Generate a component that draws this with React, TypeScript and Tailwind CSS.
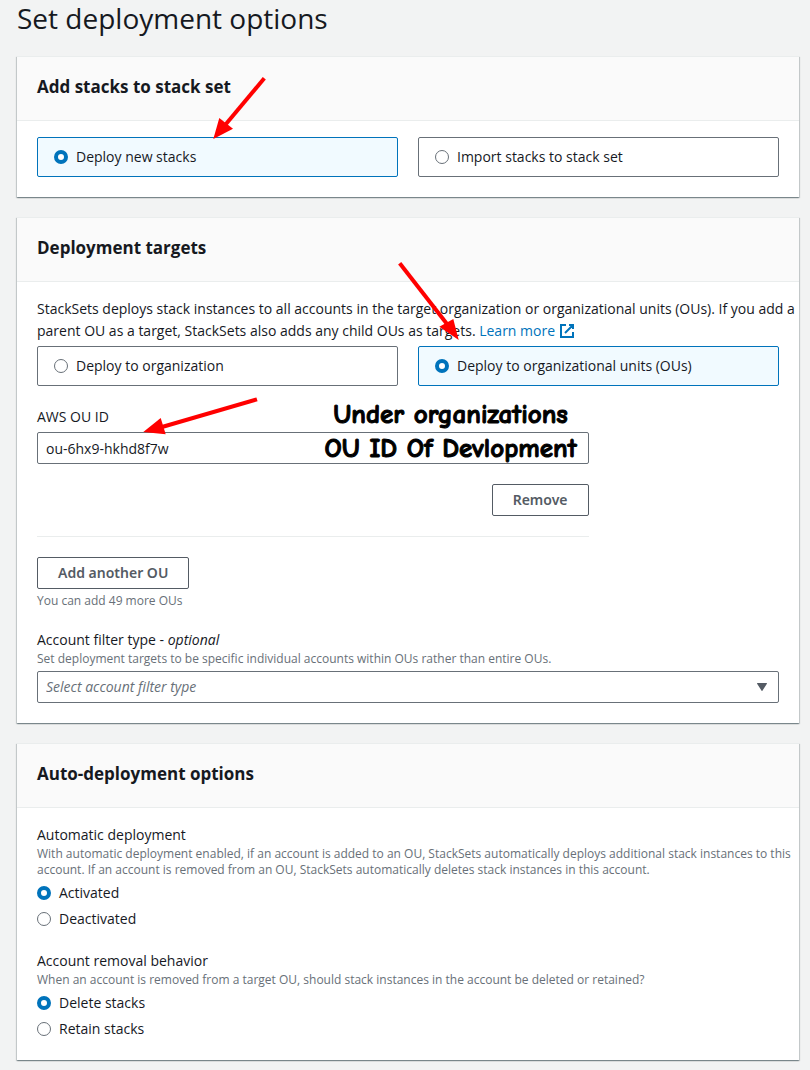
import type { ReactNode } from 'react';

function Card({ title, children }: { title: string; children: ReactNode }) {
  return (
    <section className="border-t border-[#eaeded] bg-white shadow-[0_1px_1px_0_rgba(0,28,36,0.3),1px_1px_1px_0_rgba(0,28,36,0.15),-1px_1px_1px_0_rgba(0,28,36,0.15)]">
      <header className="flex h-16 items-center border-b border-[#eaeded] bg-[#fafafa] px-5 pb-1">
        <h2 className="text-[17px] leading-[22px] font-bold">{title}</h2>
      </header>
      <div className="px-5 pt-4 pb-5">{children}</div>
    </section>
  );
}

const radioClass =
  'm-0 size-3.5 shrink-0 appearance-none rounded-full border border-[#687078] bg-white checked:border-4 checked:border-[#0073bb]';

function Tile({ name, label, checked = false }: { name: string; label: string; checked?: boolean }) {
  return (
    <label className="flex h-10 items-center gap-2 rounded-[2px] border border-[#687078] bg-white px-4 has-checked:border-[#0073bb] has-checked:bg-[#f1faff]">
      <input type="radio" name={name} defaultChecked={checked} className={radioClass} />
      <span>{label}</span>
    </label>
  );
}

function Radio({ name, label, checked = false }: { name: string; label: string; checked?: boolean }) {
  return (
    <label className="flex items-center gap-2">
      <input type="radio" name={name} defaultChecked={checked} className={radioClass} />
      <span>{label}</span>
    </label>
  );
}

const buttonClass =
  "h-8 rounded-[2px] border border-[#545b64] bg-white px-5 font-['Noto_Sans',sans-serif] text-[14px] font-semibold text-[#545b64]";

function Arrow({ from, to, head }: { from: [number, number]; to: [number, number]; head: string }) {
  return (
    <g>
      <line x1={from[0]} y1={from[1]} x2={to[0]} y2={to[1]} stroke="#ff0000" strokeWidth="4" />
      <polygon points={head} fill="#ff0000" />
    </g>
  );
}

export default function App() {
  return (
    <main className="relative min-h-screen bg-[#f2f3f3] pr-[11px] pb-2.5 pl-[17px] font-['Open_Sans','Noto_Sans',sans-serif] text-[14px] leading-[22px] text-[#16191f]">
      <h1 className="text-[28px] leading-9">Set deployment options</h1>
      <div className="mt-5 flex flex-col gap-5">
        <Card title="Add stacks to stack set">
          <div className="grid grid-cols-2 gap-5">
            <Tile name="stacks" label="Deploy new stacks" checked />
            <Tile name="stacks" label="Import stacks to stack set" />
          </div>
        </Card>

        <Card title="Deployment targets">
          <p className="-mr-5">
            StackSets deploys stack instances to all accounts in the target organization or organizational units (OUs).
            If you add a parent OU as a target, StackSets also adds any child OUs as targets.{' '}
            <a href="#" className="text-[#0073bb]">
              Learn more
              <svg viewBox="0 0 16 16" className="ml-1 inline size-4 align-[-3px]" fill="none" stroke="currentColor" strokeWidth="2">
                <path d="M10 2h4v4M6 10l8-8M14 9.05V14H2V2h5" />
              </svg>
            </a>
          </p>
          <div className="mt-1 grid grid-cols-2 gap-5">
            <Tile name="target" label="Deploy to organization" />
            <Tile name="target" label="Deploy to organizational units (OUs)" checked />
          </div>

          <div className="mt-5 grid grid-cols-4 gap-x-5">
            <div className="relative col-span-3 flex flex-col border-b border-[#eaeded] pb-5">
              <label htmlFor="ou-id">AWS OU ID</label>
              <input
                id="ou-id"
                type="text"
                defaultValue="ou-6hx9-hkhd8f7w"
                className="mt-1 h-8 w-full rounded-[2px] border border-[#687078] bg-white px-2"
              />
              <button type="button" className={`${buttonClass} mt-5 self-end`}>
                Remove
              </button>
              <p className="pointer-events-none absolute -top-2 right-3 text-center font-['Comic_Sans_MS','Comic_Neue','Noto_Sans',sans-serif] text-[27px] leading-[34px] font-bold whitespace-nowrap text-black [-webkit-text-stroke:1px_black]">
                Under organizations
                <br />
                OU ID Of Devlopment
              </p>
            </div>
          </div>

          <button type="button" className={`${buttonClass} mt-5 block`}>
            Add another OU
          </button>
          <p className="mt-1 text-[12px] leading-4 text-[#687078]">You can add 49 more OUs</p>

          <label htmlFor="filter" className="mt-5 block">
            Account filter type - <i>optional</i>
          </label>
          <p className="text-[12px] leading-4 text-[#687078]">
            Set deployment targets to be specific individual accounts within OUs rather than entire OUs.
          </p>
          <div className="relative mt-1">
            <select
              id="filter"
              className="block h-8 w-full appearance-none rounded-[2px] border border-[#687078] bg-white px-2 text-[#687078] italic"
            >
              <option>Select account filter type</option>
            </select>
            <svg viewBox="0 0 10 8" className="pointer-events-none absolute top-3 right-3 h-2 w-2.5" fill="#545b64">
              <path d="M0.5 0h9a.5.5 0 0 1 .4.8L5.4 7.7a.5.5 0 0 1-.8 0L.1.8A.5.5 0 0 1 .5 0z" />
            </svg>
          </div>
        </Card>

        <Card title="Auto-deployment options">
          <fieldset>
            <legend>Automatic deployment</legend>
            <p className="-mr-5 text-[12px] leading-4 text-[#687078]">
              With automatic deployment enabled, if an account is added to an OU, StackSets automatically deploys
              additional stack instances to this account. If an account is removed from an OU, StackSets automatically
              deletes stack instances in this account.
            </p>
            <div className="mt-1 flex flex-col gap-1">
              <Radio name="auto" label="Activated" checked />
              <Radio name="auto" label="Deactivated" />
            </div>
          </fieldset>
          <fieldset className="mt-5">
            <legend>Account removal behavior</legend>
            <p className="text-[12px] leading-4 text-[#687078]">
              When an account is removed from a target OU, should stack instances in the account be deleted or retained?
            </p>
            <div className="mt-1 flex flex-col gap-1">
              <Radio name="removal" label="Delete stacks" checked />
              <Radio name="removal" label="Retain stacks" />
            </div>
          </fieldset>
        </Card>
      </div>

      <svg
        viewBox="0 0 480 450"
        className="pointer-events-none absolute top-0 left-0 h-[450px] w-[480px]"
        aria-hidden="true"
      >
        <Arrow from={[264.3, 78.3]} to={[226, 124]} head="213.3,139 219.3,118 233,128.7" />
        <Arrow from={[399.7, 263.3]} to={[447, 324]} head="458.7,340 453.3,319 439.3,326.7" />
        <Arrow from={[257, 399.3]} to={[162, 427]} head="143.3,432 160.7,418 165.7,434.3" />
      </svg>
    </main>
  );
}
